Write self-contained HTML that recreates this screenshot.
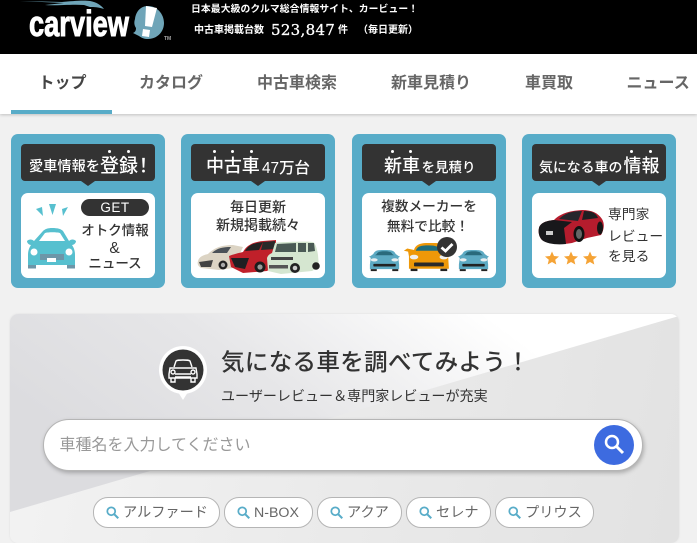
<!DOCTYPE html>
<html lang="ja"><head><meta charset="utf-8"><style>
html,body{margin:0;padding:0;height:543px;overflow:hidden}
body{width:697px;position:relative;background:#f1f1f1;font-family:"Liberation Sans","Noto Sans CJK JP",sans-serif;color:#333}
.a{position:absolute;white-space:nowrap;line-height:1}
.c{position:absolute;transform:translateX(-50%);white-space:nowrap;line-height:1;text-align:center}
svg{position:absolute;overflow:visible}
.nav{font-size:16px;font-weight:700;color:#666;top:75.5px}
.card{position:absolute;top:134px;width:154px;height:154px;background:#58acc8;border-radius:7px}
.bub{position:absolute;left:10px;top:10px;width:134px;height:37px;background:#333;border-radius:4px}
.bub:after{content:"";position:absolute;left:60px;top:37px;border:7px solid transparent;border-top:5px solid #333;border-bottom:0}
.wh{position:absolute;left:10px;top:59px;width:134px;height:85px;background:#fff;border-radius:7px}
.bt{color:#fff;font-weight:500}
.dot{position:absolute;width:3px;height:3px;border-radius:50%;background:#fff;top:6px}
.chip{position:absolute;top:497px;height:29px;border:1px solid #b5b5b5;background:#fff;border-radius:15px;box-sizing:content-box;font-size:14.2px;color:#666;line-height:29px;white-space:nowrap}
.chip svg{left:12px;top:8px}
.chip span{position:absolute;left:29px;top:0.5px}
</style></head><body>
<div class="a" style="left:0;top:0;width:697px;height:54px;background:#000"></div>
<svg style="left:0;top:0" width="180" height="50" viewBox="0 0 180 50">
<path d="M20 1 L62 2 C72 1 84 0 90 1 C96 2 101 5 104 9 C98 7 94 7 90 7 L84 5 C72 4 55 6 45 5 L64 3 Z" fill="#6fa5b8"/>
<path d="M148 6 C157 6 164 14 164 23 C164 32 157 39 148 39 C144 39 142 38 139 36 C137 35 135 34 133 33 C135 32 136 31 136 28 C134 25 134 22 135 19 C136 11 141 6 148 6 Z" fill="#6fa5b8"/>
<path d="M146 6 L157 8 L152 27 L145 26 Z M143 29 L150 30 L149 37 L142 36 Z" fill="#fff"/>
<text transform="translate(29 36) scale(1 1.45)" font-family="Liberation Sans" font-weight="700" font-size="25" fill="#fff" textLength="100" lengthAdjust="spacingAndGlyphs" stroke="#fff" stroke-width=".7">carview</text>
<text x="164" y="40" font-family="Liberation Sans" font-weight="700" font-size="5" fill="#aaa">TM</text>
</svg>
<div class="a" style="left:191px;top:5px;font-size:9.8px;font-weight:700;color:#fff;letter-spacing:.1px">日本最大級のクルマ総合情報サイト、カービュー！</div>
<div class="a" style="left:194px;top:26px;font-size:10px;font-weight:700;color:#fff">中古車掲載台数</div>
<div class="a" style="left:271px;top:23px;font-size:15px;color:#fff;font-family:'DejaVu Serif','Liberation Serif',serif;letter-spacing:.3px;-webkit-text-stroke:.3px #fff">523,847</div>
<div class="a" style="left:338px;top:26px;font-size:10px;font-weight:700;color:#fff">件</div>
<div class="a" style="left:358px;top:26px;font-size:10px;font-weight:700;color:#fff">（毎日更新）</div>

<div class="a" style="left:0;top:54px;width:697px;height:60px;background:#fff;box-shadow:0 1px 3px rgba(0,0,0,.2)"></div>
<div class="a" style="left:11px;top:110px;width:101px;height:4px;background:#58acc8"></div>
<div class="a nav" style="left:38.5px;color:#444">トップ</div>
<div class="a nav" style="left:139px">カタログ</div>
<div class="a nav" style="left:257px">中古車検索</div>
<div class="a nav" style="left:391px">新車見積り</div>
<div class="a nav" style="left:525px">車買取</div>
<div class="a nav" style="left:626.5px">ニュース</div>

<!-- card 1 -->
<div class="card" style="left:11px"><div class="bub"></div><div class="wh"></div></div>
<div class="a bt" style="left:29px;top:160px;font-size:14.2px">愛車情報を</div>
<div class="a bt" style="left:100px;top:157px;font-size:19px">登録</div>
<div class="a bt" style="left:134px;top:157px;font-size:19px">！</div>
<div class="dot" style="left:108px;top:150px"></div><div class="dot" style="left:127px;top:150px"></div>
<svg style="left:21px;top:195px" width="70" height="80" viewBox="0 0 70 80">
<path d="M15 14 L21 12 L22 21 Z M28 9 L35 9 L31.5 20 Z M47 12 L42 21 L41 14 Z" fill="#57c0cf"/>
<path d="M22 36 C24 34 27 33 31 33 C37 33 40 34 42 36 L48 46 C50 44 53 44 55 46 C55 48 53 50 51 50 C53 53 54 56 54 60 L54 70 L7 70 L7 60 C7 56 8 53 10 50 C8 50 6 48 6 46 C8 44 11 44 13 46 Z" fill="#57c0cf"/>
<path d="M24 38 C27 37 36 37 39 38 L44 46 L18 46 Z" fill="#fff"/>
<circle cx="13" cy="57" r="3.5" fill="#fff"/><circle cx="48" cy="57" r="3.5" fill="#fff"/>
<rect x="19" y="59" width="24" height="6" fill="#6d96a8"/><rect x="26" y="63" width="9" height="4" fill="#fff"/>
<rect x="7" y="70" width="8" height="3.5" fill="#6d96a8"/><rect x="46" y="70" width="8" height="3.5" fill="#6d96a8"/>
</svg>
<div class="a" style="left:81px;top:199px;width:68px;height:17px;border-radius:9px;background:#333;color:#fff;font-size:13.5px;line-height:17px;text-align:center;letter-spacing:.5px">GET</div>
<div class="c" style="left:115px;top:223.5px;font-size:13.5px;font-weight:500">オトク情報</div>
<div class="c" style="left:114.5px;top:240.5px;font-size:15.5px">&amp;</div>
<div class="c" style="left:115px;top:256.5px;font-size:13.5px;font-weight:500">ニュース</div>

<!-- card 2 -->
<div class="card" style="left:181px"><div class="bub"></div><div class="wh"></div></div>
<div class="a bt" style="left:206px;top:157px;font-size:18px;letter-spacing:-.1px">中古車</div>
<div class="a bt" style="left:262px;top:160.5px;font-size:15.4px">47万台</div>
<div class="dot" style="left:213px;top:150px"></div><div class="dot" style="left:231px;top:150px"></div><div class="dot" style="left:250px;top:150px"></div>
<div class="c" style="left:258px;top:200px;font-size:14px;font-weight:500">毎日更新</div>
<div class="c" style="left:258px;top:218px;font-size:14px;font-weight:500">新規掲載続々</div>
<svg style="left:191px;top:235px" width="135" height="45" viewBox="0 0 135 45">
<path d="M7 26 C8 22 12 20 17 19 C23 13 30 10 42 10 L52 12 L42 33 L28 35 L10 33 C7 31 6 29 7 26Z" fill="#dcd4c4"/>
<path d="M21 18 C26 13 32 12 40 12 L36 18Z" fill="#4b5157"/>
<path d="M8 27 L22 25 L20 32 L10 32Z" fill="#444"/><circle cx="32" cy="30" r="4.5" fill="#222"/><circle cx="32" cy="30" r="2.2" fill="#aaa"/>
<path d="M38 21 C43 19 48 18 52 17 C56 10 62 7 72 6 L85 5 L85 30 L76 36 L52 38 L40 32Z" fill="#c0202a"/>
<path d="M54 16 C58 9 64 8 72 7 L68 15Z" fill="#222"/><path d="M72 7 L84 6 L84 14 L70 15Z" fill="#2a2a2a"/>
<path d="M40 23 L58 23 L54 34 L44 32Z" fill="#1f1f22"/>
<circle cx="69" cy="32" r="5.5" fill="#1c1c1c"/><circle cx="69" cy="32" r="2.6" fill="#999"/>
<path d="M77 36 L76 23 C77 20 79 19 81 18 L84 8 C85 7 118 6 122 7 C125 9 126 14 127 20 L128 32 L121 36 L90 39Z" fill="#d5e6d0"/>
<path d="M86 9 L105 8 L105 17 L84 17Z M107 8 L115 8 L115 17 L107 17Z M117 8 L123 8 L124 16 L117 17Z" fill="#4a5a55"/>
<rect x="80" y="22" width="22" height="3" fill="#444"/><rect x="78" y="30" width="19" height="3.5" fill="#555"/>
<circle cx="104" cy="33" r="5" fill="#222"/><circle cx="104" cy="33" r="2.3" fill="#ccc"/>
<circle cx="125" cy="31" r="3.8" fill="#222"/>
</svg>

<!-- card 3 -->
<div class="card" style="left:352px"><div class="bub"></div><div class="wh"></div></div>
<div class="a bt" style="left:384px;top:157px;font-size:18px">新車</div>
<div class="a bt" style="left:421.5px;top:161px;font-size:13.5px">を見積り</div>
<div class="dot" style="left:391px;top:150px"></div><div class="dot" style="left:409px;top:150px"></div>
<div class="c" style="left:429px;top:200px;font-size:13.7px;font-weight:500">複数メーカーを</div>
<div class="c" style="left:428px;top:220px;font-size:13.7px;font-weight:500">無料で比較！</div>
<svg style="left:362px;top:235px" width="135" height="45" viewBox="0 0 135 45">
<defs><g id="car"><path d="M9 14 C11 9 13 8 22 8 C31 8 33 9 35 14 L38 17 L40 18 L38 20 L39 30 L39 37 L5 37 L5 30 L6 20 L4 18 L6 17Z" fill="#5ca9c2"/>
<path d="M13 14 C14 11 17 10 22 10 C27 10 30 11 31 14 L33 16 L11 16Z" fill="#2a6a7c"/>
<ellipse cx="10" cy="23" rx="4" ry="2.5" fill="#e8eef0"/><ellipse cx="34" cy="23" rx="4" ry="2.5" fill="#e8eef0"/>
<rect x="9" y="29" width="26" height="4" rx="1" fill="#222"/><rect x="6" y="37" width="7" height="3" fill="#222"/><rect x="31" y="37" width="7" height="3" fill="#222"/></g></defs>
<use href="#car" transform="translate(3.6 9.7) scale(.86 .66)"/>
<use href="#car" transform="translate(92.6 9.7) scale(.86 .66)"/>
<g transform="translate(10.4 4.1) scale(.85 .78)">
<path d="M49 14 C50 8 56 5 63 5 L74 5 C80 5 84 8 85 14 L91 14 L91 18 L89 20 L90 38 L43 38 L43 22 L42 16 L37 15 L41 12 Z" fill="#ee9808"/>
<path d="M51 15 C53 9 57 8 66 8 C75 8 79 10 82 15Z" fill="#1f6e7d"/>
<ellipse cx="49" cy="23" rx="5" ry="3" fill="#f0f0ee"/><ellipse cx="84" cy="23" rx="5" ry="3" fill="#f0f0ee"/>
<rect x="49" y="30" width="35" height="5" rx="1" fill="#2a2a2a"/><rect x="45" y="38" width="8" height="3" fill="#222"/><rect x="80" y="38" width="8" height="3" fill="#222"/>
</g>
<circle cx="85" cy="12" r="10" fill="#333"/>
<path d="M79.5 12.5 L83.5 16 L90.5 9" fill="none" stroke="#fff" stroke-width="2.8"/>
</svg>

<!-- card 4 -->
<div class="card" style="left:522px"><div class="bub"></div><div class="wh"></div></div>
<div class="a bt" style="left:539px;top:160.5px;font-size:13.9px">気になる車の</div>
<div class="a bt" style="left:623.5px;top:157px;font-size:18px">情報</div>
<div class="dot" style="left:630px;top:150px"></div><div class="dot" style="left:649px;top:150px"></div>
<svg style="left:532px;top:200px" width="75" height="70" viewBox="0 0 75 70">
<path d="M7 28 C8 24 12 21 22 20 C28 14 36 11 50 10 C60 10 66 13 70 19 C73 24 72 30 69 35 L55 38 L40 43 C30 45 15 44 10 40 C7 37 6 32 7 28Z" fill="#b51c2d"/>
<path d="M7 28 C8 24 12 21 22 20 L40 22 L32 28 L34 44 C25 45 15 44 10 40 C7 37 6 32 7 28Z" fill="#18181b"/>
<path d="M27 19 C33 13 40 11 50 11 L46 21 Z" fill="#26262c"/>
<path d="M52 11 C60 11 64 13 66 18 L50 20Z" fill="#1e1e22"/>
<rect x="14" y="31" width="7" height="4" fill="#ccc"/>
<ellipse cx="47" cy="34" rx="5.5" ry="8" fill="#111"/><ellipse cx="47" cy="34" rx="3" ry="5" fill="#666"/>
<ellipse cx="68" cy="28" rx="3" ry="6.5" fill="#151515"/>
<g fill="#f5a335"><path id="s" d="M20 51.5 L22 56 L27 56.5 L23.2 59.8 L24.3 64.5 L20 62 L15.7 64.5 L16.8 59.8 L13 56.5 L18 56Z"/><path d="M39 51.5 L41 56 L46 56.5 L42.2 59.8 L43.3 64.5 L39 62 L34.7 64.5 L35.8 59.8 L32 56.5 L37 56Z"/><path d="M58 51.5 L60 56 L65 56.5 L61.2 59.8 L62.3 64.5 L58 62 L53.7 64.5 L54.8 59.8 L51 56.5 L56 56Z"/></g>
</svg>
<div class="a" style="left:608px;top:208px;font-size:13.8px">専門家</div>
<div class="a" style="left:608px;top:230px;font-size:13.8px">レビュー</div>
<div class="a" style="left:608px;top:250px;font-size:13.8px">を見る</div>

<!-- panel -->
<div style="position:absolute;left:10px;top:314px;width:669px;height:229px;border-radius:8px;overflow:hidden;box-shadow:0 0 2px rgba(0,0,0,.08);background:linear-gradient(100deg,#f3f3f3 0%,#ececec 40%,#e2e2e2 100%)">
<svg style="left:0;top:0" width="669" height="229"><defs><linearGradient id="g" x1="0" y1="0.4" x2="1" y2="0"><stop offset="0" stop-color="#dcdcdf"/><stop offset=".35" stop-color="#e6e6e8"/><stop offset=".75" stop-color="#ffffff"/></linearGradient></defs>
<path d="M0 0 H669 V2 L0 198 Z" fill="url(#g)"/></svg>
</div>

<svg style="left:155px;top:342px" width="60" height="60" viewBox="0 0 60 60">
<circle cx="28" cy="28" r="24" fill="#fff"/><path d="M23 50 L33 50 L28 58Z" fill="#fff"/>
<circle cx="28" cy="28" r="20.5" fill="#333"/>
<g fill="none" stroke="#fff" stroke-width="1.4"><path d="M19 25 L21 19 C22 18 24 18 28 18 C32 18 34 18 35 19 L37 25"/><path d="M15 26 H41 L42 32 V36 H14 V32 Z"/><path d="M20 32 H36 M20 35 H36 M16 36 V40 H20 V36 M36 36 V40 H40 V36"/><circle cx="18" cy="30" r="2"/><circle cx="38" cy="30" r="2"/></g>
</svg>
<div class="a" style="left:221px;top:350.5px;font-size:23.5px;font-weight:500;letter-spacing:.35px">気になる車を調べてみよう！</div>
<div class="a" style="left:221px;top:388.5px;font-size:14.05px">ユーザーレビュー＆専門家レビューが充実</div>

<div class="a" style="left:43px;top:419px;width:598px;height:50px;background:#fff;border:1px solid #b5b5b5;border-radius:26px;box-shadow:1px 2px 4px rgba(0,0,0,.25);box-sizing:content-box"></div>
<div class="a" style="left:59.5px;top:438px;font-size:16px;color:#999">車種名を入力してください</div>
<div class="a" style="left:594px;top:425px;width:40px;height:40px;border-radius:50%;background:#3d6be0"></div>
<svg style="left:594px;top:425px" width="40" height="40" viewBox="0 0 40 40"><circle cx="18" cy="17" r="6" fill="none" stroke="#fff" stroke-width="2.5"/><path d="M22.5 21.5 L29 28" stroke="#fff" stroke-width="3"/></svg>

<div class="chip" style="left:93px;width:125px"><svg width="14" height="14" viewBox="0 0 16 16"><circle cx="6" cy="6" r="4.5" fill="none" stroke="#58acc8" stroke-width="2"/><path d="M9.5 9.5 L14 14" stroke="#58acc8" stroke-width="2.4"/></svg><span>アルファード</span></div>
<div class="chip" style="left:224px;width:87px"><svg width="14" height="14" viewBox="0 0 16 16"><circle cx="6" cy="6" r="4.5" fill="none" stroke="#58acc8" stroke-width="2"/><path d="M9.5 9.5 L14 14" stroke="#58acc8" stroke-width="2.4"/></svg><span>N-BOX</span></div>
<div class="chip" style="left:317px;width:83px"><svg width="14" height="14" viewBox="0 0 16 16"><circle cx="6" cy="6" r="4.5" fill="none" stroke="#58acc8" stroke-width="2"/><path d="M9.5 9.5 L14 14" stroke="#58acc8" stroke-width="2.4"/></svg><span>アクア</span></div>
<div class="chip" style="left:406px;width:83px"><svg width="14" height="14" viewBox="0 0 16 16"><circle cx="6" cy="6" r="4.5" fill="none" stroke="#58acc8" stroke-width="2"/><path d="M9.5 9.5 L14 14" stroke="#58acc8" stroke-width="2.4"/></svg><span>セレナ</span></div>
<div class="chip" style="left:495px;width:97px"><svg width="14" height="14" viewBox="0 0 16 16"><circle cx="6" cy="6" r="4.5" fill="none" stroke="#58acc8" stroke-width="2"/><path d="M9.5 9.5 L14 14" stroke="#58acc8" stroke-width="2.4"/></svg><span>プリウス</span></div>
</body></html>
